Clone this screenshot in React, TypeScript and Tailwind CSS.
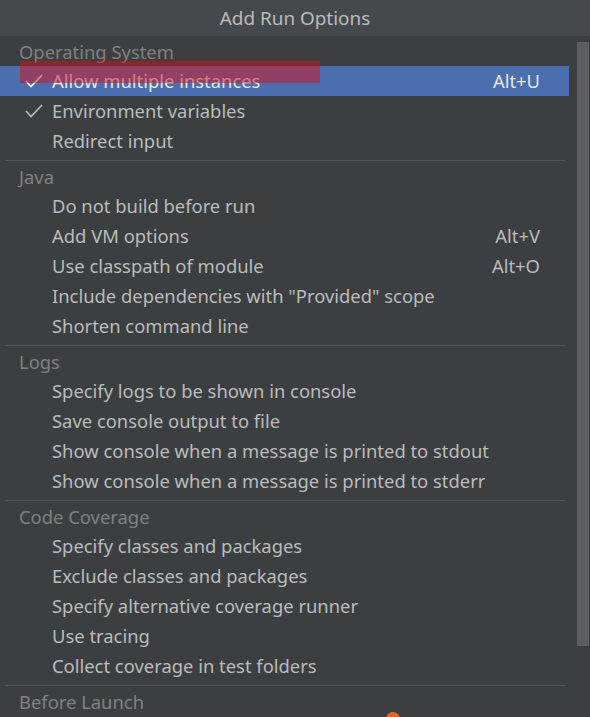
import React from "react";

type Item = { label: string; checked?: boolean; shortcut?: string; selected?: boolean };
type Section = { title: string; items: Item[] };

const sections: Section[] = [
  {
    title: "Operating System",
    items: [
      { label: "Allow multiple instances", checked: true, shortcut: "Alt+U", selected: true },
      { label: "Environment variables", checked: true },
      { label: "Redirect input" },
    ],
  },
  {
    title: "Java",
    items: [
      { label: "Do not build before run" },
      { label: "Add VM options", shortcut: "Alt+V" },
      { label: "Use classpath of module", shortcut: "Alt+O" },
      { label: 'Include dependencies with "Provided" scope' },
      { label: "Shorten command line" },
    ],
  },
  {
    title: "Logs",
    items: [
      { label: "Specify logs to be shown in console" },
      { label: "Save console output to file" },
      { label: "Show console when a message is printed to stdout" },
      { label: "Show console when a message is printed to stderr" },
    ],
  },
  {
    title: "Code Coverage",
    items: [
      { label: "Specify classes and packages" },
      { label: "Exclude classes and packages" },
      { label: "Specify alternative coverage runner" },
      { label: "Use tracing" },
      { label: "Collect coverage in test folders" },
    ],
  },
  { title: "Before Launch", items: [] },
];

function Check({ light }: { light?: boolean }) {
  return (
    <svg width="18" height="14" viewBox="0 0 18 14" className="shrink-0">
      <polyline
        points="1,7 6,12.5 17,1"
        fill="none"
        stroke={light ? "#ffffff" : "#bbbbbb"}
        strokeWidth="1.7"
      />
    </svg>
  );
}

function Row({ item }: { item: Item }) {
  return (
    <div
      className={
        "relative flex h-[30px] items-center pl-[25px] pr-[29px] " +
        (item.selected ? "bg-[#4b6eaf] text-[#e6e6e6]" : "text-[#bbbbbb]")
      }
    >
      <div className="flex w-[27px] items-center">{item.checked && <Check light={item.selected} />}</div>
      <span className="flex-1 whitespace-nowrap">{item.label}</span>
      {item.shortcut && <span className="whitespace-nowrap">{item.shortcut}</span>}
      {item.selected && (
        <div className="absolute left-[20px] top-[-5px] h-[22px] w-[300px] bg-[rgba(215,15,25,0.5)]" />
      )}
    </div>
  );
}

export default function App() {
  return (
    <div
      className="relative h-[717px] w-[590px] overflow-hidden bg-[#3c3f41] text-[18.4px]"
      style={{ fontFamily: '"Noto Sans", "Open Sans", sans-serif' }}
    >
      <div className="flex h-[36px] items-center justify-center bg-[#46494b] text-[18.9px] text-[#bbbbbb]">
        Add Run Options
      </div>
      <div className="flex">
        <div className="w-[569px]">
          {sections.map((s, i) => (
            <div key={s.title}>
              {i > 0 && <div className="ml-[5px] mt-[4px] h-px w-[560px] bg-[#515354]" />}
              <div className="mt-[2px] flex h-[28px] items-center pl-[19px] text-[#808080]">{s.title}</div>
              {s.items.map((it) => (
                <Row key={it.label} item={it} />
              ))}
            </div>
          ))}
        </div>
        <div className="ml-[8px] mt-[6px] h-[604px] w-[12px] bg-[#5b5d5f]" />
      </div>
      <div className="absolute left-[386px] top-[712px] h-[8px] w-[14px] rounded-t-full bg-[#e8662b]" />
    </div>
  );
}
